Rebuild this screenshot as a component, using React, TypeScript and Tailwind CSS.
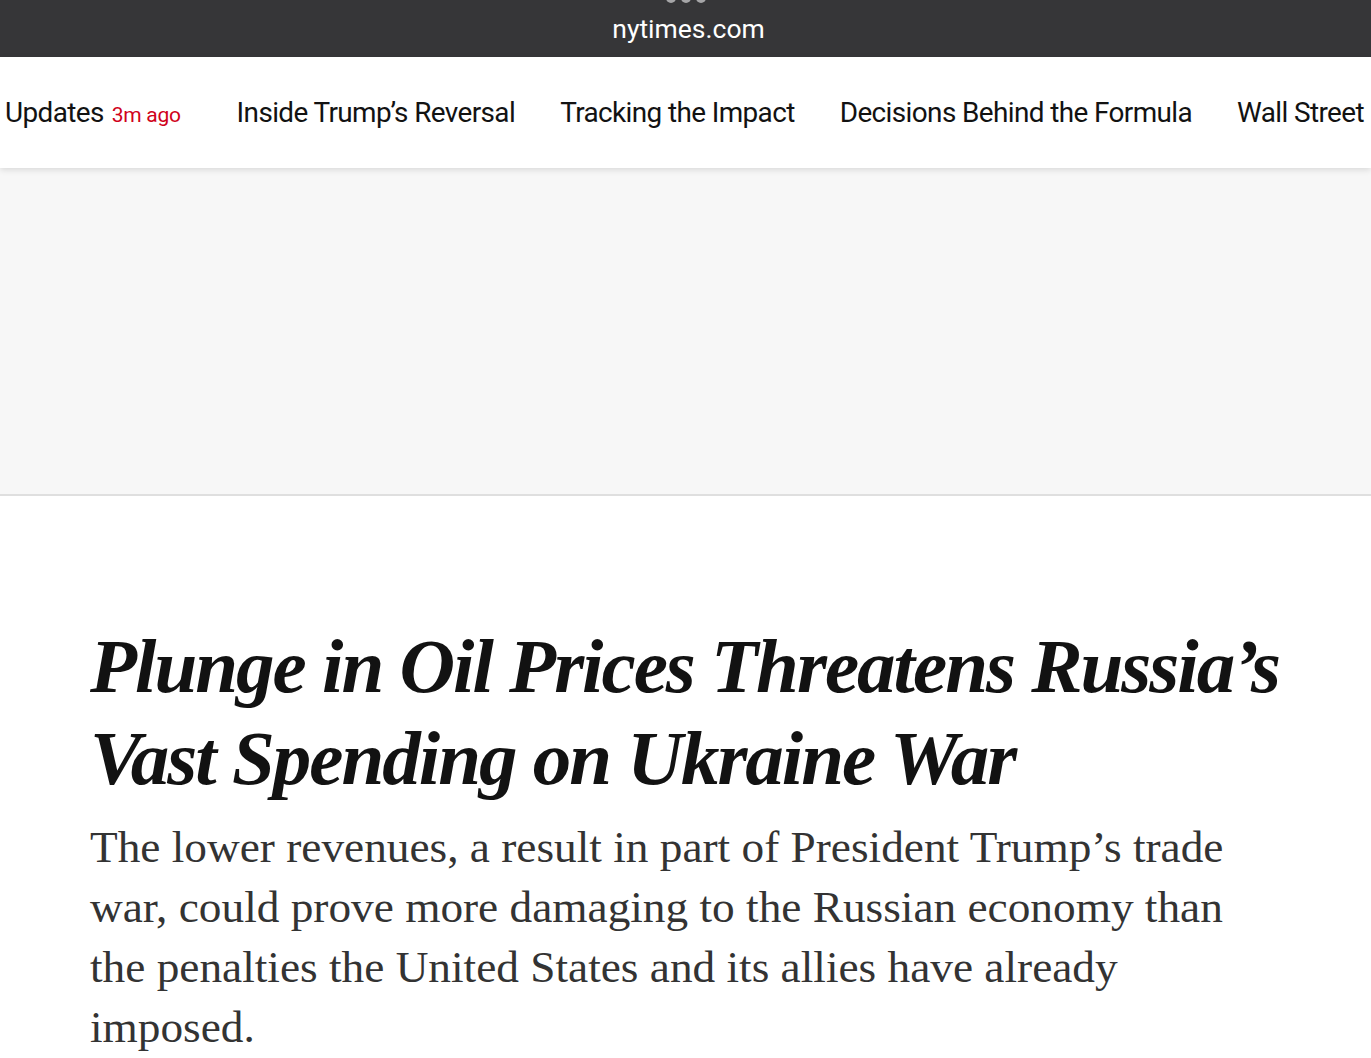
const navItems = [
  "Inside Trump’s Reversal",
  "Tracking the Impact",
  "Decisions Behind the Formula",
  "Wall Street",
];

export default function App() {
  return (
    <div className="min-h-screen bg-white overflow-hidden">
      {/* browser url bar */}
      <div className="relative h-[57px] bg-[#363638] flex items-end justify-center pb-[15px]">
        <div className="absolute top-[-7px] left-1/2 -translate-x-1/2 flex gap-[5px]">
          <span className="w-[10px] h-[10px] rounded-full bg-[#a5a5a7]" />
          <span className="w-[10px] h-[10px] rounded-full bg-[#a5a5a7]" />
          <span className="w-[10px] h-[10px] rounded-full bg-[#a5a5a7]" />
        </div>
        <span className="text-white text-[26.5px] leading-none font-['Roboto',sans-serif] translate-x-[3px]">nytimes.com</span>
      </div>

      {/* section nav */}
      <div className="relative z-10 h-[111px] bg-white shadow-[0_2px_6px_rgba(0,0,0,0.12)] flex items-center whitespace-nowrap font-['Roboto',sans-serif] text-[#121212] text-[27.9px] tracking-[-0.6px]">
        <div className="flex items-baseline gap-[45px] pl-[5px]">
          <div className="flex items-baseline gap-[8px] mr-[11px]">
            <span>Updates</span>
            <span className="text-[#d0021b] text-[21px] tracking-[-0.3px]">3m ago</span>
          </div>
          {navItems.map((item) => (
            <span key={item}>{item}</span>
          ))}
        </div>
      </div>

      {/* ad slot */}
      <div className="h-[328px] bg-[#f7f7f7] border-b-2 border-[#dfdfdf]" />

      {/* headline */}
      <div className="pl-[90px] pr-[50px] pt-[124px]">
        <h1 className="font-['Liberation_Serif',serif] italic font-bold text-[#121212] text-[77px] leading-[92px] tracking-[-2px]">
          Plunge in Oil Prices Threatens Russia’s Vast Spending on Ukraine War
        </h1>
        <p className="mt-[13px] font-['Liberation_Serif',serif] text-[#333] text-[45.3px] leading-[60px] max-w-[1160px]">
          The lower revenues, a result in part of President Trump’s trade war, could prove more damaging to the Russian economy than the penalties the United States and its allies have already imposed.
        </p>
      </div>
    </div>
  );
}
